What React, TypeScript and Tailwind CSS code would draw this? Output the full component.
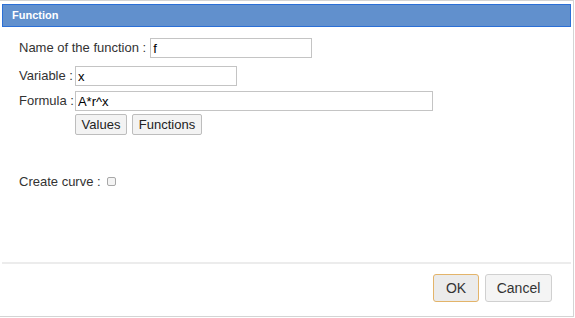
export default function App() {
  return (
    <div className="h-[318px] w-[575px] bg-white font-['Liberation_Sans',Arial,sans-serif] text-[13px] text-[#333]">
      <div className="flex h-[317px] w-[574px] flex-col border-r border-t border-b border-[#d4d4d4] bg-white px-[2px] pt-[3px]">
        <div className="flex h-[23px] items-center border border-[#2b6fd6] bg-[#6190cd] pl-[9px] text-[11px] font-bold text-white">
          Function
        </div>

        <div className="flex flex-1 flex-col pl-[17px] pt-[11px]">
          <div className="flex items-center">
            <span>Name of the function :</span>
            <input
              readOnly
              value="f"
              className="ml-[4px] h-[20px] w-[162px] border border-[#c4c4c4] px-[2px] text-[13px] text-black outline-none"
            />
          </div>
          <div className="mt-[8px] flex items-center">
            <span>Variable :</span>
            <input
              readOnly
              value="x"
              className="ml-[2px] h-[20px] w-[162px] border border-[#c4c4c4] px-[2px] text-[13px] text-black outline-none"
            />
          </div>
          <div className="mt-[5px] flex items-center">
            <span>Formula :</span>
            <input
              readOnly
              value="A*r^x"
              className="ml-[1px] h-[20px] w-[358px] border border-[#c4c4c4] px-[2px] text-[13px] text-black outline-none"
            />
          </div>
          <div className="ml-[56px] mt-[3px] flex gap-[5px]">
            <button className="h-[21px] w-[52px] rounded-[2px] border border-[#bdbdbd] bg-[#f3f3f3] text-[13px] text-[#222]">
              Values
            </button>
            <button className="h-[21px] w-[70px] rounded-[2px] border border-[#bdbdbd] bg-[#f3f3f3] text-[13px] text-[#222]">
              Functions
            </button>
          </div>
          <div className="mt-[37px] flex items-center">
            <span>Create curve :</span>
            <span className="ml-[6px] inline-block h-[9px] w-[9px] rounded-[2px] border border-[#a8a8a8] bg-[#f4f4f4]" />
          </div>
        </div>

        <div className="flex h-[54px] items-start justify-end gap-[6px] border-t-2 border-[#ececec] pr-[19px] pt-[10px]">
          <button className="h-[28px] w-[46px] rounded-[3px] border border-[#e3b46a] bg-[#ebebeb] text-[14px] text-[#333]">
            OK
          </button>
          <button className="h-[28px] w-[67px] rounded-[3px] border border-[#d0d0d0] bg-[#f4f4f4] text-[14px] text-[#333]">
            Cancel
          </button>
        </div>
      </div>
    </div>
  );
}
